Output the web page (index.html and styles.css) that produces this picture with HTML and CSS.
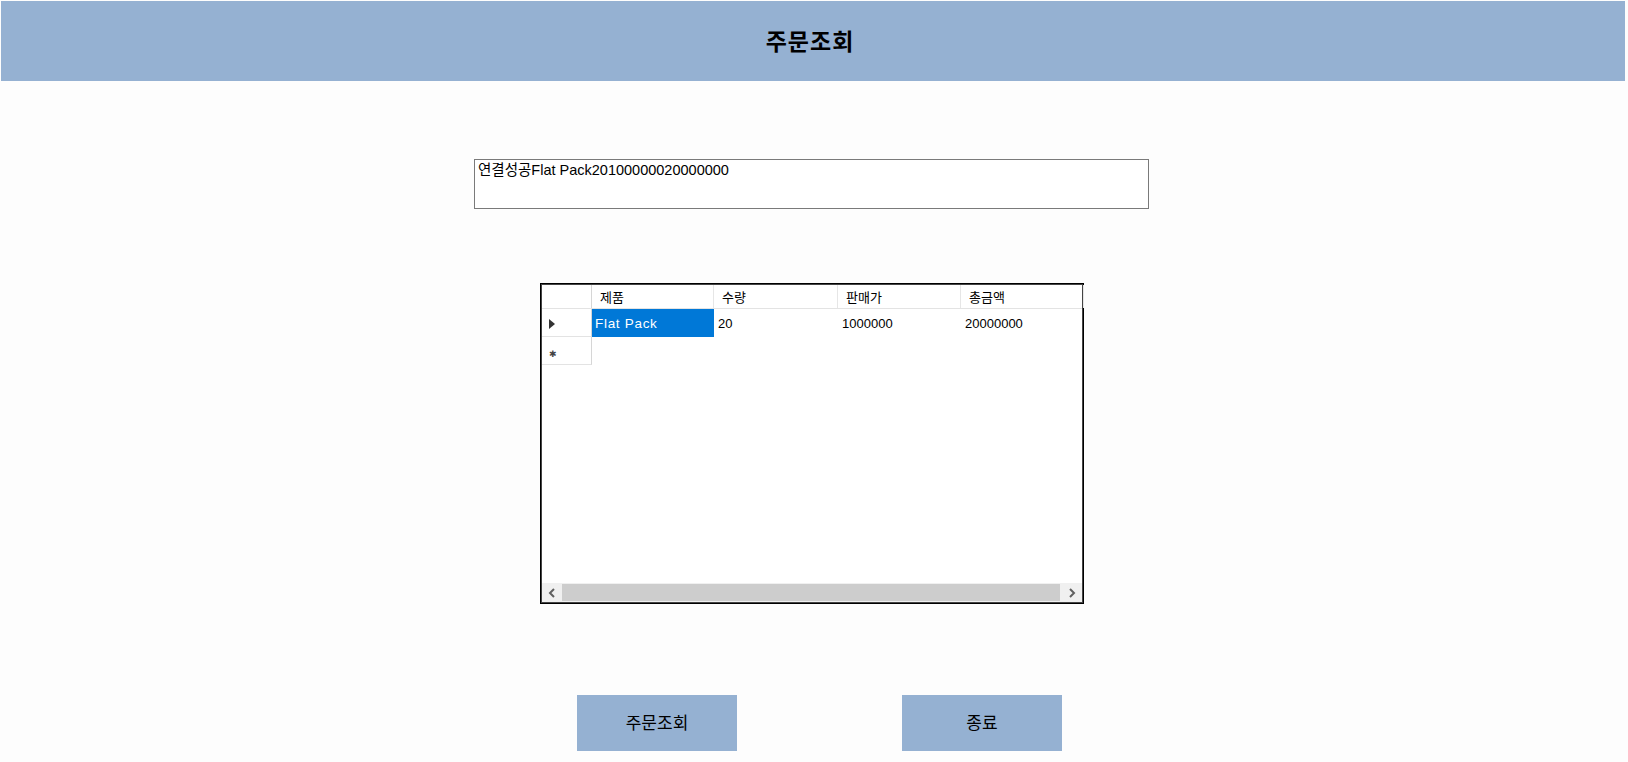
FILE: index.html
```html
<!DOCTYPE html>
<html lang="ko">
<head>
<meta charset="utf-8">
<title>주문조회</title>
<link rel="stylesheet" href="styles.css">
</head>
<body>
<header class="titlebar"><h1 class="title">주문조회</h1></header>
<main class="content">
  <div class="textbox">연결성공Flat Pack20100000020000000</div>
  <div class="datagrid">
    <div class="grid-rows">
      <div class="row head-row">
        <div class="rowhead corner"></div>
        <div class="cell hcell">제품</div>
        <div class="cell hcell">수량</div>
        <div class="cell hcell">판매가</div>
        <div class="cell hcell">총금액</div>
        <div class="cell hcell filler"></div>
      </div>
      <div class="row data-row">
        <div class="rowhead"><span class="arrow"></span></div>
        <div class="cell selected">Flat Pack</div>
        <div class="cell">20</div>
        <div class="cell">1000000</div>
        <div class="cell">20000000</div>
        <div class="cell filler"></div>
      </div>
      <div class="row data-row">
        <div class="rowhead"><span class="star">✱</span></div>
        <div class="cell"></div>
        <div class="cell"></div>
        <div class="cell"></div>
        <div class="cell"></div>
        <div class="cell filler"></div>
      </div>
    </div>
    <div class="hscroll">
      <div class="sbtn"><svg width="8" height="10" viewBox="0 0 8 10"><path d="M6 1 L2 5 L6 9" fill="none" stroke="#606060" stroke-width="2"/></svg></div>
      <div class="track"><div class="thumb"></div></div>
      <div class="sbtn"><svg width="8" height="10" viewBox="0 0 8 10"><path d="M2 1 L6 5 L2 9" fill="none" stroke="#606060" stroke-width="2"/></svg></div>
    </div>
  </div>
  <div class="buttons">
    <button class="btn">주문조회</button>
    <button class="btn">종료</button>
  </div>
</main>
</body>
</html>
```

FILE: styles.css
```css
* { box-sizing: border-box; }
html, body { margin: 0; padding: 0; }
body {
  width: 1628px;
  height: 762px;
  overflow: hidden;
  background: #fdfdfd;
  font-family: "Liberation Sans", "Noto Sans CJK KR", sans-serif;
  color: #000;
}
.titlebar {
  margin: 1px 3px 0 1px;
  height: 80px;
  background: #95b1d2;
  display: flex;
  align-items: center;
  justify-content: center;
}
.title {
  margin: 0 0 2px -6px;
  font-size: 23px;
  font-weight: bold;
  letter-spacing: 1px;
}
.content {
  display: flex;
  flex-direction: column;
  align-items: flex-start;
}
.textbox {
  margin: 78px 0 0 474px;
  width: 675px;
  height: 50px;
  border: 1px solid #7a7a7a;
  background: #fff;
  padding: 1px 3px;
  font-size: 14.5px;
  line-height: 18px;
  letter-spacing: 0;
}
.datagrid {
  margin: 74px 0 0 540px;
  width: 544px;
  height: 321px;
  border: 1px solid #000;
  box-shadow: inset 1px 1px 0 #444, inset -1px -1px 0 #444;
  background: #fff;
  display: flex;
  flex-direction: column;
  justify-content: space-between;
  padding: 1px;
}
.grid-rows { display: flex; flex-direction: column; }
.row {
  display: grid;
  grid-template-columns: 50px 122px 124px 123px 123px 1fr;
}
.head-row { height: 24px; border-bottom: 1px solid #e3e3e3; }
.data-row { height: 28px; }
.rowhead {
  border-right: 1px solid #d6d6d6;
  border-bottom: 1px solid #e3e3e3;
  display: flex;
  align-items: center;
  padding-left: 7px;
}
.corner { border-bottom: none; }
.cell {
  font-size: 13px;
  padding: 0 4px;
  display: flex;
  align-items: center;
  white-space: nowrap;
}
.hcell {
  padding-left: 8px;
  border-right: 1px solid #e6e6e6;
  font-size: 13px;
}
.filler { border-right: none; }
.selected { background: #0078d7; color: #fff; padding-left: 3px; font-size: 13.5px; letter-spacing: 0.7px; }
.arrow {
  width: 0; height: 0;
  border-top: 5px solid transparent;
  border-bottom: 5px solid transparent;
  border-left: 6px solid #333;
  margin-top: 3px;
}
.star { font-size: 9px; color: #444; margin-top: 6px; margin-left: 0; }
.hscroll {
  height: 19px;
  background: #f0f0f0;
  display: flex;
  align-items: center;
}
.sbtn {
  width: 20px;
  height: 19px;
  display: flex;
  align-items: center;
  justify-content: center;
}
.track { flex: 1; height: 17px; display: flex; }
.thumb { flex: 1; margin: 0 2px 0 0; background: #cdcdcd; }
.buttons {
  margin: 91px 0 0 577px;
  display: flex;
  gap: 165px;
}
.btn {
  width: 160px;
  height: 56px;
  border: none;
  background: #95b1d2;
  font-family: "Liberation Sans", "Noto Sans CJK KR", sans-serif;
  font-size: 17px;
  color: #000;
  padding: 0 0 3px 0;
}
```
